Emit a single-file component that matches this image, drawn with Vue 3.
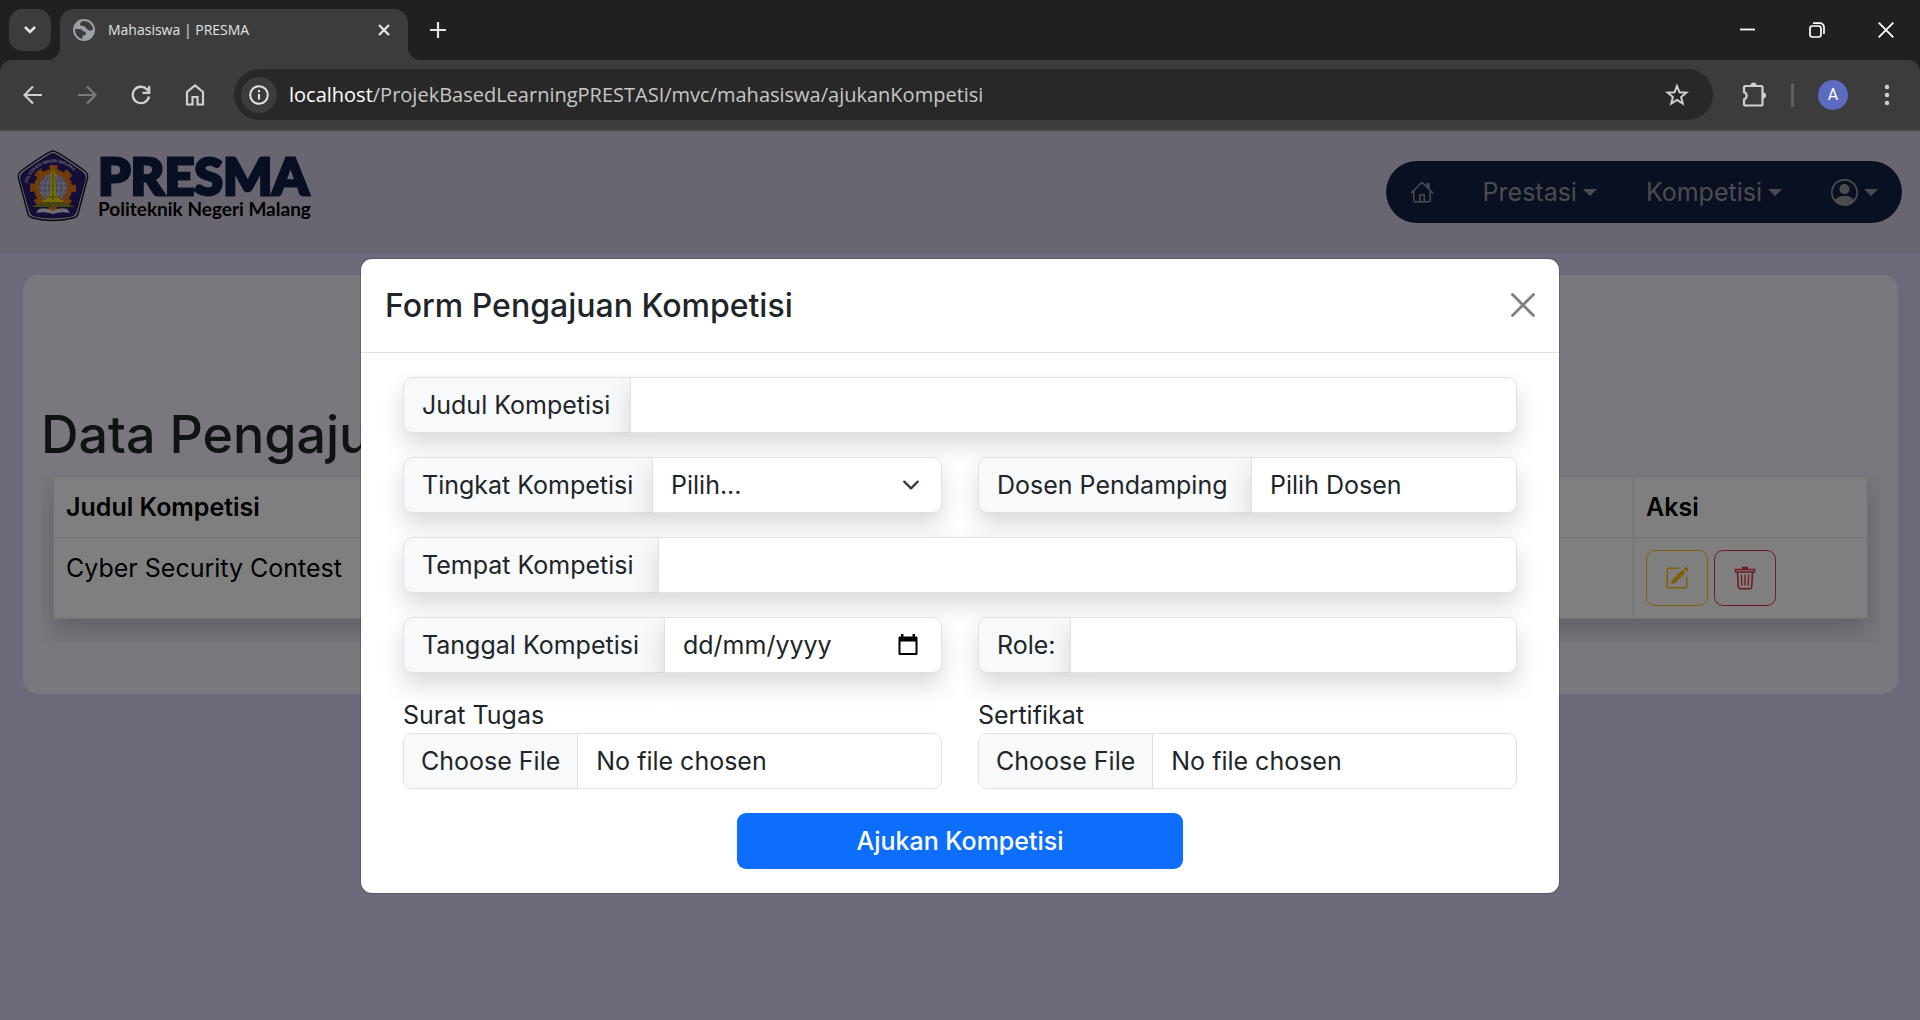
<script setup>
import { ref } from 'vue'

const judul = ref('')
const tempat = ref('')
const tanggal = ref('')
const role = ref('')
const tingkat = ref('')
const dosen = ref('')
const host = 'localhost'
const path = '/ProjekBasedLearningPRESTASI/mvc/mahasiswa/ajukanKompetisi'
</script>

<template>
  <div class="window">
    <header class="chrome">
      <div class="tabstrip">
        <button class="tab-search" aria-label="Search tabs">
          <svg width="14" height="10" viewBox="0 0 14 10"><path d="M2 2l5 5 5-5" fill="none" stroke="#e3e3e3" stroke-width="2.6" /></svg>
        </button>
        <div class="tab">
          <svg class="favicon" width="22" height="22" viewBox="0 0 22 22">
            <circle cx="11" cy="11" r="11" fill="#9aa0a6" />
            <path d="M11 2C9 2 7.500 3 7 5c0 2 2 2 3.500 2 2 0 1.500 2 3 2.500 1.500.5 1 2 3 2 1.500 0 2.500-.5 3.500-.5 0-5-4-9-9-9zM2 10c0 5 3 9 7.500 10 0-1.500-.5-3 1-3.500 2-.5 2.500-.5 2.500-2.500 0-1.500-2-1-3-2S9 10 6.500 10z" fill="#3c3c3c" />
          </svg>
          <span class="tab-title">Mahasiswa | PRESMA</span>
          <button class="tab-close" aria-label="Close tab">
            <svg width="14" height="14" viewBox="0 0 14 14"><path d="M2 2l10 10M12 2L2 12" stroke="#e8e8e8" stroke-width="2.2" /></svg>
          </button>
        </div>
        <button class="new-tab" aria-label="New tab">
          <svg width="16" height="16" viewBox="0 0 16 16"><path d="M8 0v16M0 8h16" stroke="#e3e3e3" stroke-width="2.2" /></svg>
        </button>
        <div class="controls">
          <button aria-label="Minimize"><svg width="16" height="16" viewBox="0 0 16 16"><path d="M0 7.5h15" stroke="#fff" stroke-width="1.8" /></svg></button>
          <button aria-label="Restore"><svg width="16" height="16" viewBox="0 0 16 16"><rect x="1" y="4" width="11" height="11" rx="2.4" fill="none" stroke="#fff" stroke-width="1.7" /><path d="M4 1.2h7a4 4 0 0 1 4 4V12" fill="none" stroke="#fff" stroke-width="1.7" /></svg></button>
          <button aria-label="Close"><svg width="16" height="16" viewBox="0 0 16 16"><path d="M.7.7l14.6 14.6M15.3.7L.7 15.3" stroke="#fff" stroke-width="1.8" /></svg></button>
        </div>
      </div>
      <div class="toolbar">
        <button class="tool" aria-label="Back"><svg width="20" height="20" viewBox="0 0 20 20"><path d="M19 10H2.5M10 1.5L1.5 10l8.5 8.5" fill="none" stroke="#d0d0d0" stroke-width="2.2" /></svg></button>
        <button class="tool" aria-label="Forward"><svg width="20" height="20" viewBox="0 0 20 20"><path d="M1 10h16.5M10 1.5l8.5 8.5-8.5 8.5" fill="none" stroke="#7b7b7b" stroke-width="2.2" /></svg></button>
        <button class="tool" aria-label="Reload"><svg width="20" height="20" viewBox="0 0 20 20"><path d="M18 11.5A8.2 8.2 0 1 1 16 4.4l1.500 1.600" fill="none" stroke="#d0d0d0" stroke-width="2.3" /><path d="M18.200 1v6.800H11.500" fill="none" stroke="#d0d0d0" stroke-width="2.3" /></svg></button>
        <button class="tool" aria-label="Home"><svg width="20" height="22" viewBox="0 0 20 22"><path d="M2 20.500V8l8-6.500L18 8v12.500h-5.500V13h-5v7.500z" fill="none" stroke="#d0d0d0" stroke-width="2.2" /></svg></button>
        <div class="omnibox">
          <button class="site-info" aria-label="Site information">
            <svg width="20" height="20" viewBox="0 0 20 20"><circle cx="10" cy="10" r="8.800" fill="none" stroke="#e3e3e3" stroke-width="2" /><path d="M10 9v5.500M10 5v2.200" stroke="#e3e3e3" stroke-width="2" /></svg>
          </button>
          <a class="url" :href="'http://' + host + path"><span>{{ host }}</span>{{ path }}</a>
          <button class="star" aria-label="Bookmark">
            <svg width="24" height="24" viewBox="0 0 24 24"><path d="M12 3l2.500 6.300 6.800.4-5.200 4.300 1.700 6.600L12 17l-5.800 3.600L7.900 14 2.700 9.700l6.800-.4z" fill="none" stroke="#d0d0d0" stroke-width="2" /></svg>
          </button>
        </div>
        <button class="tool" aria-label="Extensions">
          <svg width="26" height="26" viewBox="0 0 26 26"><path d="M3 5.500Q3 4 4.500 4H20q1.500 0 1.500 1.500V22q0 1.500-1.500 1.500H4.500Q3 23.500 3 22v-4.500a4 4 0 0 0 0-7.500z" fill="none" stroke="#d0d0d0" stroke-width="2.2" /><path d="M9.500 3.500a3 3 0 0 1 6 0zM22 10.500a3 3 0 0 1 0 6z" fill="#d0d0d0" /></svg>
        </button>
        <span class="divider"></span>
        <button class="avatar" aria-label="Profile">A</button>
        <button class="tool" aria-label="Menu"><svg width="6" height="22" viewBox="0 0 6 22"><g fill="#d0d0d0"><circle cx="3" cy="3" r="2.200" /><circle cx="3" cy="11" r="2.200" /><circle cx="3" cy="19" r="2.200" /></g></svg></button>
      </div>
    </header>

    <main class="viewport">
      <div class="navbar">
        <a class="brand" href="#">
          <svg width="72" height="72" viewBox="0 0 72 72">
            <path d="M36 1Q40 1 68 21Q72 24 70 30L61 64Q60 67 56 68Q36 73 16 68Q12 67 11 64L2 30Q0 24 4 21Q32 1 36 1z" fill="#d4d0dc" stroke="#181430" stroke-width="1.500" />
            <path d="M36 3.500Q39 3.500 66 22.500Q69 25 68 30L59 62Q58 65 55 66Q36 70 17 66Q14 65 13 62L4 30Q3 25 6 22.500Q33 3.500 36 3.500z" fill="#2b1d72" stroke="#17113d" />
            <path id="crest-arc" d="M10.500 33A27 27 0 0 1 63 33" fill="none" />
            <text class="crest-text"><textPath href="#crest-arc">POLITEKNIK NEGERI MALANG</textPath></text>
            <circle cx="36" cy="38" r="20" fill="none" stroke="#e07818" stroke-width="6" stroke-dasharray="8 7.700" stroke-dashoffset="4" />
            <circle cx="36" cy="38" r="16.500" fill="#9295bc" stroke="#e07818" stroke-width="5" />
            <g fill="none" stroke="#d4d2e8" stroke-width=".8"><ellipse cx="36" cy="38" rx="6" ry="14" /><ellipse cx="36" cy="38" rx="11" ry="14" /><path d="M23 33h26M22 38h28M23 43h26" /></g>
            <path d="M34 22l2-5 2 5 1 23h3v5h4v3H26v-3h4v-5h3z" fill="#e8dc10" />
            <path d="M36 18v32M29 47h14" stroke="#8a8010" />
            <path d="M14 57l12-5h20l12 5z" fill="#8c8a22" />
            <path d="M22 59q8-2 14 2 6-4 14-2l3 4q-10-2-17 1-7-3-17-1z" fill="#dedce6" />
          </svg>
          <span class="brand-words">
            <strong>PRESMA</strong>
            <span>Politeknik Negeri Malang</span>
          </span>
        </a>
        <nav class="menu">
          <a href="#" aria-label="Beranda">
            <svg width="24" height="24" viewBox="0 0 16 16" fill="currentColor"><path d="M8.707 1.500a1 1 0 0 0-1.414 0L.646 8.146a.5.5 0 0 0 .708.708L2 8.207V13.500A1.500 1.500 0 0 0 3.500 15h9a1.500 1.500 0 0 0 1.500-1.500V8.207l.646.647a.5.5 0 0 0 .708-.708L13 5.793V2.500a.5.5 0 0 0-.5-.5h-1a.5.5 0 0 0-.5.5v1.293zM13 7.207V14h-3V9.500H6V14H3V7.207l5-5zM7 14v-3.500h2V14z" /></svg>
          </a>
          <a href="#">Prestasi<i class="caret"></i></a>
          <a href="#">Kompetisi<i class="caret"></i></a>
          <a href="#" aria-label="Akun">
            <svg width="27" height="27" viewBox="0 0 16 16" fill="currentColor"><path d="M11 6a3 3 0 1 1-6 0 3 3 0 0 1 6 0" /><path fill-rule="evenodd" d="M0 8a8 8 0 1 1 16 0A8 8 0 0 1 0 8m8-7a7 7 0 0 0-5.468 11.370C3.242 11.226 4.805 10 8 10s4.757 1.225 5.468 2.370A7 7 0 0 0 8 1" /></svg><i class="caret"></i>
          </a>
        </nav>
      </div>

      <section class="card">
        <h1>Data Pengajuan Kompetisi</h1>
        <div class="table-wrap">
          <table>
            <thead>
              <tr><th class="col-title">Judul Kompetisi</th><th></th><th class="col-action">Aksi</th></tr>
            </thead>
            <tbody>
              <tr>
                <td>Cyber Security Contest</td>
                <td></td>
                <td>
                  <div class="actions">
                    <button class="edit" aria-label="Edit">
                      <svg width="24" height="24" viewBox="0 0 16 16" fill="currentColor"><path d="M15.502 1.940a.5.5 0 0 1 0 .706L14.459 3.690l-2-2L13.502.646a.5.5 0 0 1 .707 0l1.293 1.293zm-1.750 2.456-2-2L4.939 9.210a.5.5 0 0 0-.121.196l-.805 2.414a.25.25 0 0 0 .316.316l2.414-.805a.5.5 0 0 0 .196-.120z" /><path fill-rule="evenodd" d="M1 13.500A1.500 1.500 0 0 0 2.500 15h11a1.500 1.500 0 0 0 1.500-1.500v-6a.5.5 0 0 0-1 0v6a.5.5 0 0 1-.5.5h-11a.5.5 0 0 1-.5-.5v-11a.5.5 0 0 1 .5-.5H9a.5.5 0 0 0 0-1H2.500A1.500 1.500 0 0 0 1 2.500z" /></svg>
                    </button>
                    <button class="delete" aria-label="Hapus">
                      <svg width="24" height="24" viewBox="0 0 24 24" fill="none" stroke="currentColor"><path d="M2.500 3.500h19v2.500h-19z" stroke-width="1.500" /><path d="M9 2h6" stroke-width="2.500" /><path d="M4.500 6.500l.8 14.500q.2 1.700 1.800 1.700h9.800q1.600 0 1.800-1.700l.8-14.500" stroke-width="1.600" /><path d="M8.300 8.500l.5 11M12 8.500v11M15.700 8.500l-.5 11" stroke-width="1.300" /></svg>
                    </button>
                  </div>
                </td>
              </tr>
            </tbody>
          </table>
        </div>
      </section>

      <div class="backdrop">
        <div class="modal" role="dialog" aria-labelledby="modal-title">
          <div class="modal-header">
            <h2 id="modal-title">Form Pengajuan Kompetisi</h2>
            <button class="close" aria-label="Close">
              <svg width="24" height="24" viewBox="0 0 24 24"><path d="M1.500 1.500l21 21M22.500 1.500l-21 21" stroke="#7f7f7f" stroke-width="2.800" stroke-linecap="round" /></svg>
            </button>
          </div>
          <form class="modal-body" @submit.prevent>
            <div class="group">
              <label class="addon w-judul" for="judul">Judul Kompetisi</label>
              <input id="judul" v-model="judul" class="control" type="text" />
            </div>
            <div class="row">
              <div class="group">
                <label class="addon w-tingkat" for="tingkat">Tingkat Kompetisi</label>
                <select id="tingkat" v-model="tingkat" class="control">
                  <option value="">Pilih...</option>
                </select>
                <svg class="chevron" width="18" height="18" viewBox="0 0 16 16"><path d="M2 5l6 6 6-6" fill="none" stroke="#343a40" stroke-width="2" stroke-linecap="round" stroke-linejoin="round" /></svg>
              </div>
              <div class="group">
                <label class="addon w-dosen" for="dosen">Dosen Pendamping</label>
                <select id="dosen" v-model="dosen" class="control">
                  <option value="">Pilih Dosen</option>
                </select>
              </div>
            </div>
            <div class="group">
              <label class="addon w-tempat" for="tempat">Tempat Kompetisi</label>
              <input id="tempat" v-model="tempat" class="control" type="text" />
            </div>
            <div class="row">
              <div class="group">
                <label class="addon w-tanggal" for="tanggal">Tanggal Kompetisi</label>
                <input id="tanggal" v-model="tanggal" class="control" type="text" placeholder="dd/mm/yyyy" />
                <button class="calendar" type="button" aria-label="Pilih tanggal">
                  <svg width="20" height="22" viewBox="0 0 20 22"><path d="M1.500 3.500h17v16.500h-17z" fill="none" stroke="#000" stroke-width="2" stroke-linejoin="round" /><path d="M1 3h18v4.500H1zM3 0h2.500v4H3zM14.500 0H17v4h-2.500z" /></svg>
                </button>
              </div>
              <div class="group">
                <label class="addon w-role" for="role">Role:</label>
                <input id="role" v-model="role" class="control" type="text" />
              </div>
            </div>
            <div class="row">
              <div class="file-field">
                <label for="surat">Surat Tugas</label>
                <input id="surat" type="file" />
              </div>
              <div class="file-field">
                <label for="sertifikat">Sertifikat</label>
                <input id="sertifikat" type="file" />
              </div>
            </div>
            <button class="submit" type="submit">Ajukan Kompetisi</button>
          </form>
        </div>
      </div>
    </main>
  </div>
</template>

<style>
body {
  margin: 0;
  background: #d9d5f4;
}
</style>

<style scoped>
* {
  box-sizing: border-box;
}
button {
  border: 0;
  padding: 0;
  background: none;
  font: inherit;
  color: inherit;
  display: flex;
  align-items: center;
  justify-content: center;
  cursor: pointer;
}
a {
  color: inherit;
  text-decoration: none;
}
svg {
  flex: none;
  display: block;
}
.window {
  min-height: 100vh;
  display: flex;
  flex-direction: column;
  font-family: Inter, "Open Sans", sans-serif;
  font-size: 25px;
  line-height: 36px;
  color: #212529;
}

/* Browser frame */
.chrome {
  background: #1f2120;
  font-family: "Open Sans", "Noto Sans", sans-serif;
}
.tabstrip {
  height: 60px;
  display: flex;
  align-items: flex-end;
  padding-left: 9px;
}
.tab-search {
  width: 42px;
  height: 42px;
  margin: 0 9px 9px 0;
  border-radius: 14px;
  background: #3c3c3c;
}
.tab {
  position: relative;
  width: 348px;
  height: 51px;
  padding: 0 14px 9px 13px;
  display: flex;
  align-items: center;
  background: #3c3c3c;
  border-radius: 14px 14px 0 0;
}
.tab::before,
.tab::after {
  content: "";
  position: absolute;
  bottom: 0;
  width: 14px;
  height: 14px;
}
.tab::before {
  right: 100%;
  background: radial-gradient(circle at 0 0, transparent 14px, #3c3c3c 15px);
}
.tab::after {
  left: 100%;
  background: radial-gradient(circle at 100% 0, transparent 14px, #3c3c3c 15px);
}
.tab-title {
  flex: 1;
  margin-left: 13px;
  font-size: 14px;
  line-height: 22px;
  color: #e3e3e3;
}
.tab-close {
  width: 20px;
  height: 20px;
}
.new-tab {
  width: 60px;
  height: 60px;
}
.controls {
  margin-left: auto;
  height: 60px;
  display: flex;
}
.controls button {
  width: 69px;
}
.toolbar {
  height: 71px;
  padding: 0 6px;
  display: flex;
  align-items: center;
  background: #3c3c3c;
  border-bottom: 2px solid #474747;
  border-radius: 12px 12px 0 0;
}
.tool {
  width: 54px;
  height: 54px;
}
.omnibox {
  flex: 1;
  height: 51px;
  margin: 0 14px 0 12px;
  padding: 0 24px 0 7px;
  display: flex;
  align-items: center;
  border-radius: 26px;
  background: #282828;
}
.site-info {
  width: 36px;
  height: 36px;
  border-radius: 50%;
  background: #3c3c3c;
}
.url {
  flex: 1;
  margin-left: 12px;
  font-size: 20px;
  color: #c7c7c7;
}
.url span {
  color: #fff;
}
.divider {
  width: 3px;
  height: 24px;
  margin: 0 24px 0 10px;
  background: #5f5f5f;
  border-radius: 2px;
}
.avatar {
  width: 30px;
  height: 30px;
  margin-right: 12px;
  border-radius: 50%;
  background: #5c6bc0;
  color: #fff;
  font: 16px/30px Roboto, sans-serif;
}

/* Page */
.viewport {
  position: relative;
  flex: 1;
  background: #d9d5f4;
}
.navbar {
  height: 122px;
  padding: 0 18px 0 17px;
  display: flex;
  align-items: center;
  justify-content: space-between;
  background: #d2cce0;
}
.brand {
  display: flex;
  align-items: center;
  gap: 9px;
  margin-bottom: 12px;
}
.brand-words {
  display: flex;
  flex-direction: column;
  font-family: Lato, sans-serif;
  font-size: 19px;
  font-weight: 700;
  line-height: 22px;
  color: #000;
}
.brand-words strong {
  font-size: 52px;
  font-weight: 900;
  line-height: 46px;
  color: #0f1e44;
  -webkit-text-stroke: 3px #0f1e44;
}
.crest-text {
  font: 700 4px "Open Sans", sans-serif;
  fill: #d4d0dc;
}
.menu {
  height: 62px;
  padding: 0 24px;
  display: flex;
  align-items: center;
  gap: 49px;
  border-radius: 31px;
  background: #102042;
  color: #98989f;
}
.menu a {
  display: flex;
  align-items: center;
}
.caret {
  margin-left: 6px;
  border: 7px solid transparent;
  border-top-color: currentColor;
  border-bottom: 0;
}
.card {
  margin: 22px 22px 0 23px;
  padding: 131px 18px 51px;
  border-radius: 15px;
  background: #f4f0fd;
}
h1 {
  margin: 0 0 12px;
  font-size: 52px;
  font-weight: 500;
  line-height: 58px;
}
.table-wrap {
  padding: 0 12px 24px;
  overflow: hidden;
}
table {
  width: 100%;
  border-collapse: collapse;
  background: #fff;
  color: #000;
  box-shadow: 0 12px 24px rgba(0, 0, 0, 0.2);
}
th,
td {
  padding: 12px;
  border: 1px solid #dee2e6;
  text-align: left;
  vertical-align: top;
}
th {
  font-weight: 600;
}
.col-title {
  width: 400px;
}
.col-action {
  width: 234px;
}
.actions {
  display: flex;
  gap: 6px;
}
.actions button {
  width: 62px;
  height: 56px;
  border: 1px solid currentColor;
  border-radius: 9px;
}
.actions .edit {
  color: #ffc107;
}
.actions .delete {
  color: #dc3545;
}

/* Modal */
.backdrop {
  position: absolute;
  inset: 0;
  display: flex;
  align-items: center;
  justify-content: center;
  background: rgba(0, 0, 0, 0.5);
}
.modal {
  width: 100%;
  max-width: 1198px;
  background: #fff;
  border-radius: 11px;
  box-shadow: 0 0 0 1px rgba(0, 0, 0, 0.15);
}
.modal-header {
  height: 94px;
  padding: 0 24px;
  display: flex;
  align-items: center;
  justify-content: space-between;
  border-bottom: 1px solid #dee2e6;
}
h2 {
  margin: 0;
  font-size: 32px;
  font-weight: 500;
  line-height: 45px;
}
.modal-body {
  padding: 24px 42px;
  display: flex;
  flex-direction: column;
  gap: 24px;
}
.row {
  display: flex;
  gap: 36px;
}
.row > * {
  flex: 1;
  min-width: 0;
}
.group {
  position: relative;
  display: flex;
}
.addon,
.control {
  height: 56px;
  border: 1px solid #dee2e6;
  padding: 9px 18px;
  box-shadow: 0 12px 24px rgba(0, 0, 0, 0.15);
}
.addon {
  flex: none;
  border-radius: 9px 0 0 9px;
  background: #f8f9fa;
  white-space: nowrap;
}
.control {
  flex: 1;
  min-width: 0;
  margin: 0 0 0 -1px;
  border-radius: 0 9px 9px 0;
  background: #fff;
  font: inherit;
  color: inherit;
  appearance: none;
}
.control::placeholder {
  color: #212529;
  opacity: 1;
}
.w-judul {
  width: 228px;
}
.w-tingkat {
  width: 250px;
}
.w-dosen {
  width: 274px;
}
.w-tempat {
  width: 256px;
}
.w-tanggal {
  width: 262px;
}
.w-role {
  width: 93px;
}
.chevron,
.calendar {
  position: absolute;
  right: 22px;
  top: 0;
  bottom: 0;
  margin: auto 0;
}
.chevron {
  pointer-events: none;
}
.calendar {
  right: 24px;
}
.file-field {
  display: flex;
  flex-direction: column;
}
input[type="file"] {
  width: 100%;
  height: 56px;
  border: 1px solid #dee2e6;
  border-radius: 9px;
  padding: 0;
  font: inherit;
  line-height: 54px;
  color: inherit;
  background: #fff;
  overflow: hidden;
}
input[type="file"]::file-selector-button {
  height: 54px;
  margin: 0 18px 0 0;
  padding: 0 17px;
  border: 0;
  border-right: 1px solid #dee2e6;
  background: #f8f9fa;
  font: inherit;
  color: inherit;
}
.submit {
  align-self: center;
  width: 40%;
  height: 56px;
  border-radius: 9px;
  background: #0d6efd;
  color: #fff;
  font-weight: 500;
}
</style>
